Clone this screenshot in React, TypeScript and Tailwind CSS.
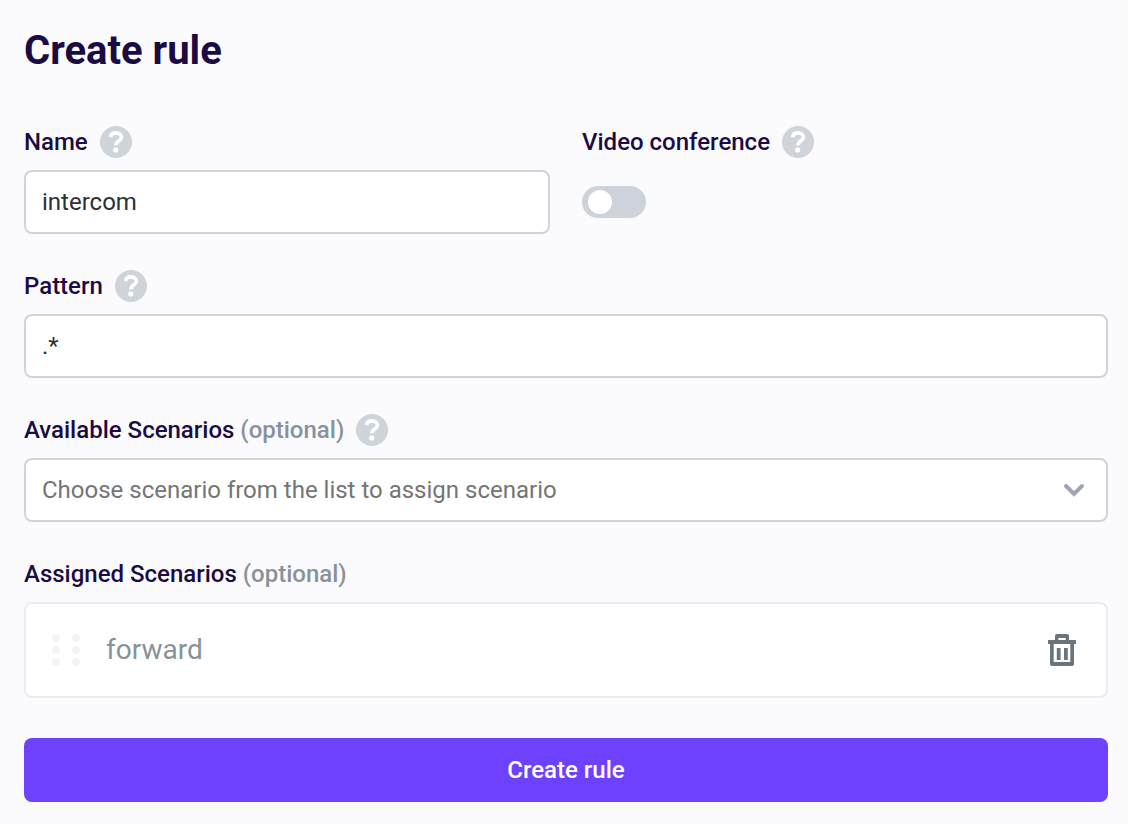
import { useState } from 'react'
import type { ReactNode } from 'react'

interface LabelProps {
  htmlFor?: string
  text: string
  optional?: boolean
  help?: boolean
}

function FieldLabel({ htmlFor, text, optional, help }: LabelProps) {
  return (
    <div className="flex h-8 items-center gap-3">
      <label htmlFor={htmlFor} className="font-medium text-[#1c0b43]">
        {text}
        {optional && <span className="text-[#879299]"> (optional)</span>}
      </label>
      {help && (
        <button type="button" aria-label={`Help: ${text}`} className="size-8 shrink-0">
          <svg viewBox="0 0 32 32" fill="none" className="size-8">
            <circle cx="16" cy="16" r="16" fill="#ced4da" />
            <path
              d="M10.6 11.2C10.9 8.4 13 6.9 16 6.9C19.3 6.9 21.4 8.6 21.4 11.2C21.4 14.8 15.8 14.8 15.8 19.4"
              stroke="white"
              strokeWidth="3.6"
            />
            <circle cx="15.7" cy="24" r="2.6" fill="white" />
          </svg>
        </button>
      )}
    </div>
  )
}

function Field({ children, ...label }: LabelProps & { children: ReactNode }) {
  return (
    <div className="flex min-w-0 flex-col gap-3">
      <FieldLabel {...label} />
      {children}
    </div>
  )
}

export default function App() {
  const [name, setName] = useState('intercom')
  const [pattern, setPattern] = useState('.*')
  const [video, setVideo] = useState(false)
  const [assigned, setAssigned] = useState(['forward'])

  return (
    <main className="min-h-screen bg-[#fbfbfe] pt-6 pr-5 pb-6 pl-6 font-['Roboto',sans-serif] text-2xl text-[#2b3135]">
      <h1 className="text-[40px] leading-[54px] font-bold text-[#1c0b43]">Create rule</h1>

      <form className="mt-12" onSubmit={(e) => e.preventDefault()}>
        <div className="flex flex-col gap-9">
          <div className="grid grid-cols-2 gap-8">
            <Field htmlFor="name" text="Name" help>
              <input
                id="name"
                type="text"
                value={name}
                onChange={(e) => setName(e.target.value)}
                className="h-16 w-full rounded-lg border-2 border-[#ced4da] bg-white px-4"
              />
            </Field>
            <Field htmlFor="video" text="Video conference" help>
              <div className="flex h-16 items-center">
                <input
                  id="video"
                  type="checkbox"
                  role="switch"
                  checked={video}
                  onChange={(e) => setVideo(e.target.checked)}
                  className="flex h-8 w-16 appearance-none items-center rounded-full bg-[#ced3db] px-1.5 before:size-6 before:rounded-full before:bg-white before:content-[''] checked:justify-end checked:bg-[#6e41ff]"
                />
              </div>
            </Field>
          </div>

          <Field htmlFor="pattern" text="Pattern" help>
            <input
              id="pattern"
              type="text"
              value={pattern}
              onChange={(e) => setPattern(e.target.value)}
              className="h-16 w-full rounded-lg border-2 border-[#ced4da] bg-white px-4"
            />
          </Field>

          <Field htmlFor="scenarios" text="Available Scenarios" optional help>
            <div className="relative">
              <select
                id="scenarios"
                defaultValue=""
                className="h-16 w-full appearance-none rounded-lg border-2 border-[#ced4da] bg-white px-4 text-[#757575]"
              >
                <option value="">Choose scenario from the list to assign scenario</option>
              </select>
              <svg
                viewBox="0 0 24 24"
                fill="none"
                className="pointer-events-none absolute top-5 right-[22px] size-6"
              >
                <path d="M4 8L12 16L20 8" stroke="#9fa5b5" strokeWidth="4" strokeLinecap="round" />
              </svg>
            </div>
          </Field>

          <Field text="Assigned Scenarios" optional>
            <ul className="flex flex-col gap-2">
              {assigned.map((scenario) => (
                <li
                  key={scenario}
                  className="flex h-24 items-center gap-6 rounded-lg border-2 border-[#e9ecf4] bg-white pr-7 pl-6"
                >
                  {/* drag handle */}
                  <svg viewBox="0 0 32 32" fill="#f3f4f9" className="size-8 shrink-0 cursor-grab">
                    {[4, 16, 28].map((y) => (
                      <g key={y}>
                        <circle cx="6" cy={y} r="4" />
                        <circle cx="26" cy={y} r="4" />
                      </g>
                    ))}
                  </svg>
                  <span className="flex-1 text-[28px] leading-[38px] text-[#879299]">{scenario}</span>
                  <button
                    type="button"
                    aria-label={`Remove ${scenario}`}
                    onClick={() => setAssigned(assigned.filter((s) => s !== scenario))}
                    className="size-8"
                  >
                    <svg viewBox="0 0 32 32" fill="#6b747b" className="size-8">
                      <path
                        fillRule="evenodd"
                        d="M9 6V2Q9 0 11 0H21Q23 0 23 2V6H30V10H28V30Q28 32 26 32H6Q4 32 4 30V10H2V6ZM12.3 4V6H19.7V4ZM7.7 10V28H24.3V10Z"
                      />
                      <path d="M10.8 14H14.6V26H10.8ZM18 14H21.8V26H18Z" />
                    </svg>
                  </button>
                </li>
              ))}
            </ul>
          </Field>
        </div>

        <button type="submit" className="mt-10 h-16 w-full rounded-lg bg-[#6e41ff] font-medium text-white">
          Create rule
        </button>
      </form>
    </main>
  )
}
